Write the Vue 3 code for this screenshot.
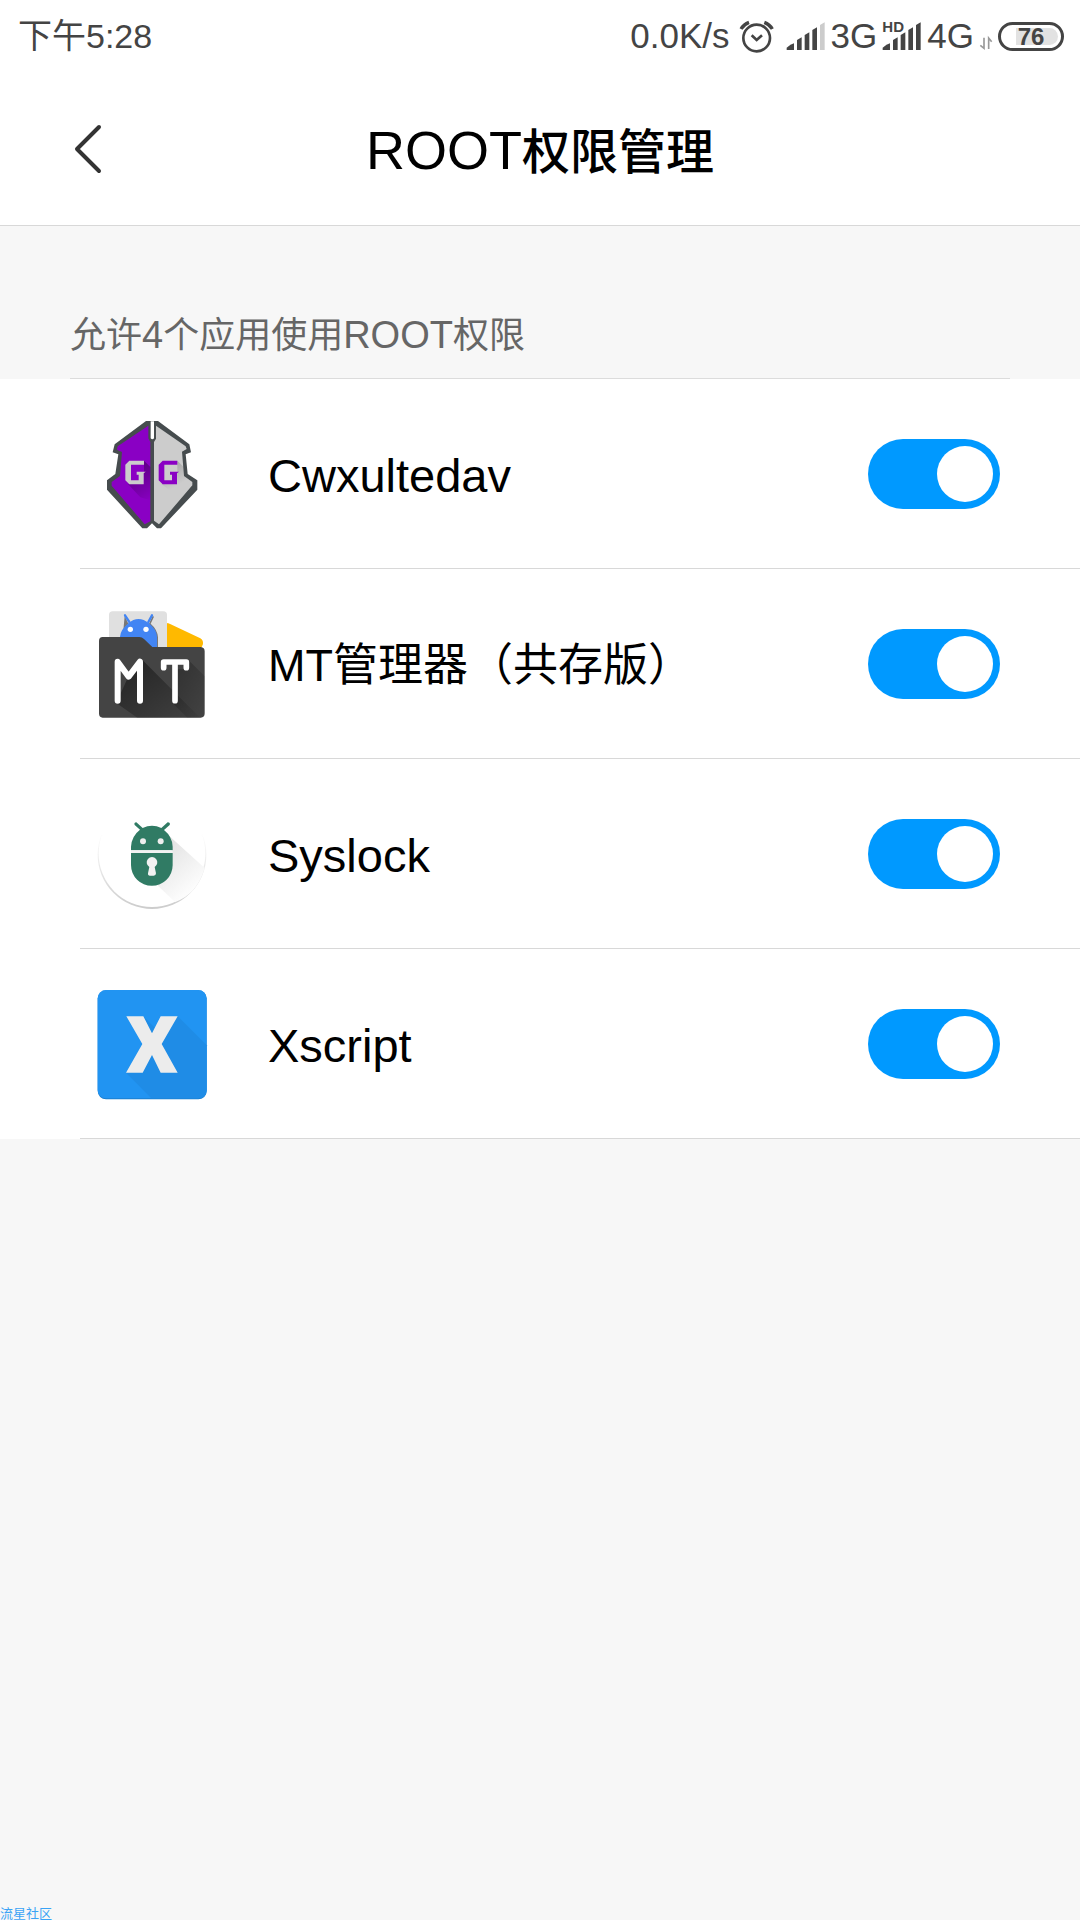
<script setup>
import { ref } from 'vue'

const apps = ref([
  { id: 'gg', name: 'Cwxultedav', lang: 'en', allowed: true },
  { id: 'mt', name: 'MT管理器（共存版）', lang: 'zh', allowed: true },
  { id: 'syslock', name: 'Syslock', lang: 'en', allowed: true },
  { id: 'xscript', name: 'Xscript', lang: 'en', allowed: true },
])

const bars = [
  'M2 87V80Q14 70 24 67V87Z',
  'M33 87V57L47 49V87Z',
  'M56 87V42L70 34V87Z',
  'M79 87V27L93 19V87Z',
  'M102 87V12L116 4V87Z',
]
</script>

<template>
  <div class="page">
    <div class="status">
      <span class="time">下午5:28</span>
      <div class="indicators">
        <span>0.0K/s</span>
        <svg class="alarm" viewBox="378 56 126 104" aria-hidden="true">
          <g fill="none" stroke="#444" stroke-width="8">
            <circle cx="431" cy="114" r="40" />
            <path d="M416 106L431 120L447 106" />
            <path d="M384 87Q392 73 408 67M454 67Q470 73 478 87" stroke-width="10" />
          </g>
        </svg>
        <svg class="signal" viewBox="0 0 120 90" aria-hidden="true">
          <path v-for="(d, i) in bars" :key="i" :d="d" :fill="i === 4 ? '#ccc' : '#444'" />
        </svg>
        <span>3G</span>
        <span class="hd-signal">
          <svg class="signal" viewBox="0 0 120 90" aria-hidden="true">
            <path v-for="(d, i) in bars" :key="i" :d="d" fill="#444" />
          </svg>
          <small>HD</small>
        </span>
        <span>4G</span>
        <svg class="data" viewBox="408 60 42 90" aria-hidden="true">
          <path d="M423 110V142L412 133M437 144V111L446 122" fill="none" stroke="#999" stroke-width="5" />
        </svg>
        <span class="battery"><b>76</b></span>
      </div>
    </div>

    <header>
      <button class="back" type="button" aria-label="返回">
        <svg viewBox="0 0 28 50" aria-hidden="true">
          <path d="M25 3L3 25L25 47" fill="none" stroke="#333" stroke-width="4" stroke-linecap="round" stroke-linejoin="round" />
        </svg>
      </button>
      <h1><span>ROOT</span>权限管理</h1>
    </header>

    <main>
      <h2>允许<span>4</span>个应用使用<span>ROOT</span>权限</h2>
      <ul>
        <li v-for="app in apps" :key="app.id">
          <label>
            <svg v-if="app.id === 'gg'" class="icon" viewBox="36 40 360 360" aria-hidden="true">
              <defs>
                <linearGradient id="gg-shade" x1="0" y1="0" x2="1" y2="1">
                  <stop offset="0" stop-opacity=".4" />
                  <stop offset=".7" stop-opacity="0" />
                </linearGradient>
              </defs>
              <path d="M198 61H234L328 131L333 155L317 161L323 220L352 239V267L243 383H231L216 368L201 383H187L81 267V239L106 220L115 161L98 155L104 131Z" fill="#464c4e" />
              <path d="M205 75V113L211 124V362L194 371L95 255V244L120 226L126 154L111 147L113 137Z" fill="#8a00c4" />
              <path d="M228 75L317 137L320 145L306 153L312 226L337 244V254L237 371L222 360V124L228 114Z" fill="#ccc" />
              <path d="M212 62H222V113Q217 119 212 113Z" fill="#fff" />
              <path d="M192 180L211 199V299L181 290L144 250H192Z M292 180L310 198L312 226L337 244L297 290L244 250H292Z" fill="url(#gg-shade)" />
              <path d="M192 180H148L136 192V239L148 251H191V218L197 213H170V222H176V239H153V192H192Z" fill="#ccc" />
              <path d="M292 180H248L236 192V239L248 251H291V218L297 213H270V222H276V239H253V192H292Z" fill="#8a00c4" />
            </svg>

            <svg v-else-if="app.id === 'mt'" class="icon" viewBox="36 40 360 360" aria-hidden="true">
              <defs>
                <linearGradient id="mt-shade" x1="0" y1="0" x2="1" y2="1">
                  <stop offset="0" stop-opacity=".5" />
                  <stop offset="1" stop-opacity=".04" />
                </linearGradient>
              </defs>
              <path d="M255 97Q264 96 272 101L361 143Q370 148 369 160L364 172H255Z" fill="#ffb900" />
              <rect x="87" y="62" width="174" height="130" rx="11" fill="#e0e0e0" />
              <path d="M124 185V138Q126 118 145 99L134 76M207 99L218 76L222 78L212 99Q232 116 234 140V185Z" fill="#777" />
              <path d="M120 170V138Q122 117 145 98Q175 72 207 98Q230 117 231 138V170Z" fill="#4285f4" />
              <path d="M135 74L148 94M216 74L205 94" stroke="#4285f4" stroke-width="7" stroke-linecap="round" />
              <circle cx="151" cy="116" r="8" fill="#fff" />
              <circle cx="198" cy="116" r="8" fill="#fff" />
              <path d="M68 139H178Q186 139 192 145L217 169H362Q374 170 374 182V368Q374 381 362 381H68Q57 381 57 368V151Q57 139 68 139Z" fill="#444" />
              <path d="M188 209L360 381H172L109 337L143 262L173 240Z" fill="url(#mt-shade)" />
              <path d="M326 209L374 257V368Q374 381 362 381H322L278 337L285 236H315Z" fill="url(#mt-shade)" opacity=".6" />
              <path d="M113 330V213L146 258L180 213V330" fill="none" stroke="#fff" stroke-width="18" stroke-linecap="round" stroke-linejoin="round" />
              <path d="M251 231V214H319V231M285 214V330" fill="none" stroke="#fff" stroke-width="17" stroke-linecap="round" stroke-linejoin="round" />
            </svg>

            <svg v-else-if="app.id === 'syslock'" class="icon" viewBox="36 10 360 360" aria-hidden="true">
              <defs>
                <linearGradient id="lock-shade" x1="0" y1="0" x2=".6" y2="1">
                  <stop offset="0" stop-color="#ddd" />
                  <stop offset="1" stop-color="#fff" />
                </linearGradient>
                <linearGradient id="lock-rim" x1="0" y1="0" x2="0" y2="1">
                  <stop offset=".3" stop-color="#fff" />
                  <stop offset="1" stop-color="#ccc" />
                </linearGradient>
              </defs>
              <circle cx="216" cy="192" r="163" fill="url(#lock-rim)" />
              <circle cx="216" cy="189" r="160" fill="#fff" />
              <path d="M268 136L374 232Q352 310 285 334L232 284L278 220Z" fill="url(#lock-shade)" />
              <path d="M153 179V168Q155 136 180 117L164 103Q161 96 169 95L188 112Q216 99 244 112L263 95Q272 96 269 103L252 118Q277 138 278 168V179Z" fill="#307b64" />
              <path d="M153 187H278V223A62 62 0 0 1 153 223Z" fill="#307b64" />
              <path d="M153 179H278V187H153Z" fill="#f2f2f2" />
              <circle cx="189" cy="152" r="9" fill="#eee" />
              <circle cx="242" cy="152" r="9" fill="#eee" />
              <path d="M208 229A16 16 0 1 1 224 229L228 248Q228 255 221 255H210Q203 255 204 248Z" fill="#f2f2f2" />
            </svg>

            <svg v-else class="icon" viewBox="36 40 360 360" aria-hidden="true">
              <rect x="53" y="59" width="327" height="327" rx="25" fill="#1b7fd0" />
              <rect x="53" y="58" width="327" height="325" rx="25" fill="#2194f2" />
              <path d="M293 137L380 224V358Q380 383 355 383H214L138 306L187 220Z" fill="#1f8ce6" />
              <path d="M190 137L245 192L216 190Z" fill="#1f8ce6" />
              <path d="M139 137H190L216 188L242 137H293L245 220L293 306H242L216 253L188 306H138L187 220Z" fill="#ececec" />
            </svg>
            <span class="name" :class="app.lang">{{ app.name }}</span>
            <input v-model="app.allowed" type="checkbox" role="switch" />
          </label>
        </li>
      </ul>
    </main>

    <footer>流星社区</footer>
  </div>
</template>

<style>
body {
  margin: 0;
  background: #f7f7f7;
}
</style>

<style scoped>
.page {
  display: flex;
  flex-direction: column;
  min-height: 100vh;
  background: #f7f7f7;
  color: #000;
  font-family: "Liberation Sans", "Noto Sans CJK SC", sans-serif;
}

.status {
  display: flex;
  align-items: center;
  justify-content: space-between;
  height: 72px;
  padding: 0 16px 0 18px;
  background: #fff;
  color: #444;
  font-size: 35px;
}

.time {
  font-size: 34px;
  line-height: 48px;
}

.indicators {
  display: flex;
  align-items: center;
  gap: 5px;
}

.alarm {
  width: 42px;
  height: 36px;
  margin-left: 4px;
}

.signal {
  display: block;
  width: 40px;
  height: 30px;
}

.hd-signal {
  position: relative;
}

.hd-signal small {
  position: absolute;
  top: 0;
  left: 0;
  font-size: 15px;
  line-height: 12px;
  font-weight: 700;
}

.data {
  width: 14px;
  height: 30px;
}

.battery {
  display: flex;
  align-items: center;
  justify-content: center;
  box-sizing: border-box;
  width: 66px;
  height: 29px;
  padding: 3px;
  border: 3px solid #444;
  border-radius: 15px;
}

.battery b {
  flex: 1;
  border-radius: 9px;
  background: linear-gradient(to right, transparent 22%, #e2e2e2 22%);
  font-size: 24px;
  line-height: 17px;
  text-align: center;
}

header {
  display: grid;
  grid-template-columns: 1fr auto 1fr;
  align-items: center;
  height: 153px;
  border-bottom: 1px solid #d8d8d8;
  background: #fff;
}

.back {
  justify-self: start;
  margin-left: 60px;
  padding: 12px 14px;
  border: 0;
  background: none;
}

.back svg {
  display: block;
  width: 28px;
  height: 50px;
}

h1 {
  margin: 0;
  padding-top: 6px;
  font-size: 48px;
  line-height: 64px;
  font-weight: 500;
}

h1 span {
  font-size: 54px;
  font-weight: 400;
}

h2 {
  margin: 0 70px;
  padding: 86px 0 18px;
  border-bottom: 1px solid #dcdcdc;
  color: #666;
  font-size: 36px;
  line-height: 48px;
  font-weight: 400;
}

h2 span {
  font-size: 38px;
  line-height: 40px;
}

ul {
  margin: 0;
  padding: 0 0 0 80px;
  background: #fff;
  list-style: none;
}

li {
  border-bottom: 1px solid #d8d8d8;
}

label {
  display: flex;
  align-items: center;
  height: 189px;
  padding: 0 80px 0 12px;
}

.icon {
  flex: none;
  width: 120px;
  height: 120px;
}

.name {
  flex: 1;
  margin-left: 56px;
  padding-top: 4px;
  font-size: 47px;
  line-height: 60px;
}

.name.zh {
  font-size: 45px;
}

input {
  display: flex;
  flex: none;
  box-sizing: border-box;
  width: 132px;
  height: 70px;
  margin: 0;
  padding: 7px;
  border-radius: 35px;
  background: #ccc;
  appearance: none;
}

input::before {
  width: 56px;
  height: 56px;
  border-radius: 50%;
  background: #fff;
  content: "";
}

input:checked {
  justify-content: flex-end;
  background: #0099ff;
}

footer {
  margin-top: auto;
  color: #3ba3f5;
  font-size: 13px;
  line-height: 12px;
}
</style>
